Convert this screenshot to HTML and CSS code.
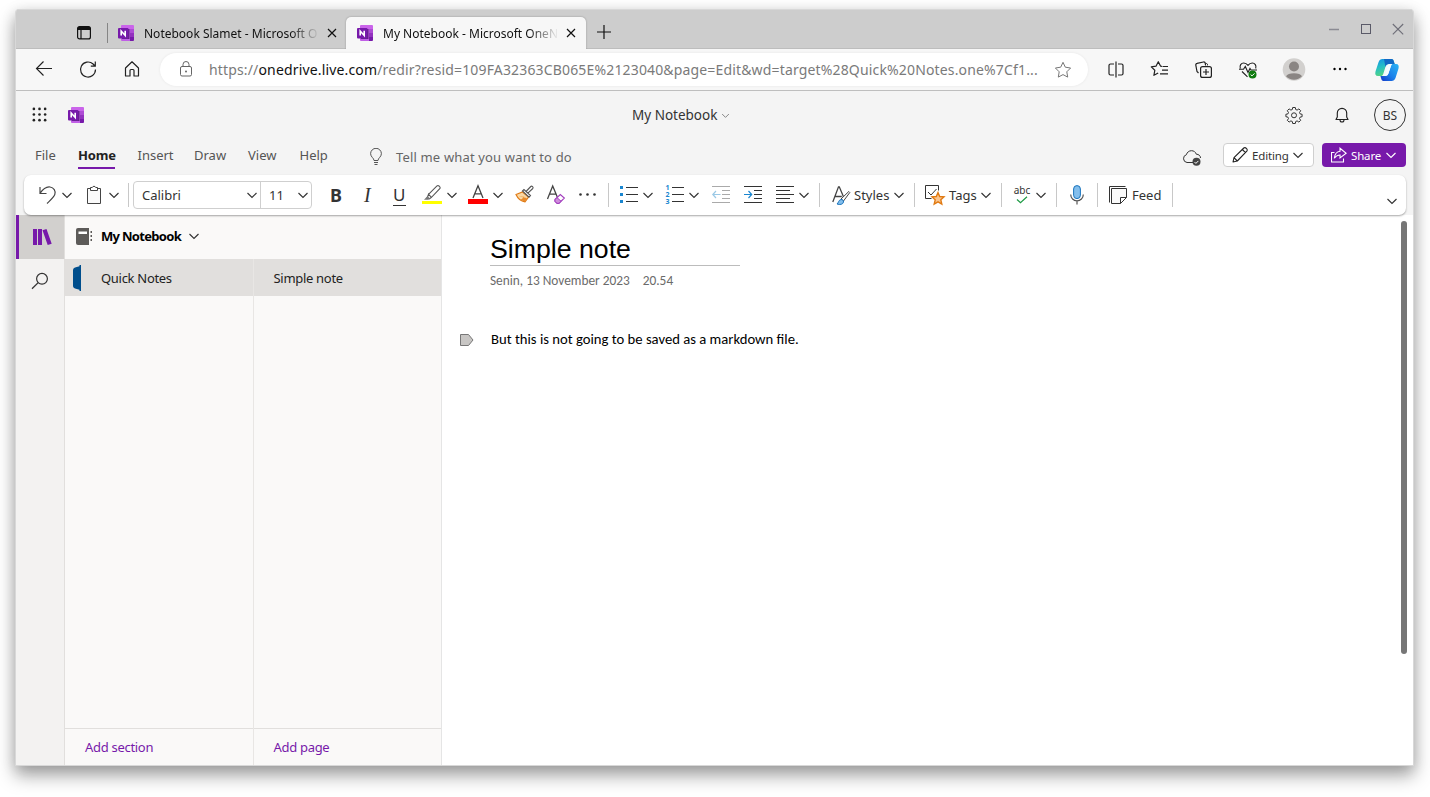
FILE: index.html
```
<!DOCTYPE html>
<html lang="id">
<head>
<meta charset="utf-8">
<title>My Notebook - Microsoft OneNote</title>
<link rel="stylesheet" href="styles.css">
</head>
<body>
<svg width="0" height="0" class="defs">
  <defs>
    <linearGradient id="cpA" x1="0" y1="0" x2="0.4" y2="1"><stop offset="0" stop-color="#1290e8"/><stop offset=".5" stop-color="#26bfc4"/><stop offset="1" stop-color="#59d67c"/></linearGradient>
    <linearGradient id="cpB" x1="1" y1="0" x2="0" y2="1"><stop offset="0" stop-color="#2ab4f4"/><stop offset=".55" stop-color="#1b80ea"/><stop offset="1" stop-color="#1538c8"/></linearGradient>
    <symbol id="onenote" viewBox="0 0 16 16">
      <path d="M4 0h11a1 1 0 0 1 1 1v4H3V1a1 1 0 0 1 1-1z" fill="#ca64ea"/>
      <path d="M3 4h9v12H4a1 1 0 0 1-1-1z" fill="#c05fe6"/>
      <path d="M12 4h4v4h-4z" fill="#ae4bd5"/><path d="M12 8h4v4h-4z" fill="#9332bf"/><path d="M12 12h4v3a1 1 0 0 1-1 1h-3z" fill="#7719aa"/>
      <path d="M4 4h7.500v10H4z" fill="#3f1060" opacity=".75"/>
      <rect y="3" width="10.500" height="10.500" rx="1" fill="#7719aa"/>
      <path d="M3.200 10.600V6l4 4.500V5.800" fill="none" stroke="#fff" stroke-width="1.600"/>
    </symbol>
    <symbol id="chev" viewBox="0 0 12 12"><path d="M1.500 4l4.500 4.500L10.500 4" fill="none" stroke="currentColor" stroke-width="1.150"/></symbol>
    <symbol id="x" viewBox="0 0 10 10"><path d="M1 1l8 8M9 1l-8 8" fill="none" stroke="currentColor" stroke-width="1.200"/></symbol>
  </defs>
</svg>
<div class="window">
  <div class="titlebar">
    <svg class="workspaces" viewBox="0 0 16 16"><rect x="1.600" y="1.600" width="12.800" height="12.300" rx="2" fill="none" stroke="#111" stroke-width="1.200"/><path d="M1.600 5V3.500a2 2 0 0 1 2-2h8.800a2 2 0 0 1 2 2V5z" fill="#111"/><path d="M5 5v9" stroke="#111" stroke-width="1.200"/></svg>
    <div class="tab idle"><svg class="logo"><use href="#onenote"/></svg><span class="tabname">Notebook Slamet - Microsoft O</span><svg class="close"><use href="#x"/></svg></div>
    <div class="tab active"><svg class="logo"><use href="#onenote"/></svg><span class="tabname">My Notebook - Microsoft OneN</span><svg class="close"><use href="#x"/></svg></div>
    <svg class="plus" viewBox="0 0 14 14"><path d="M7 0v14M0 7h14" stroke="#111" stroke-width="1.200"/></svg>
    <div class="controls">
      <svg viewBox="0 0 12 12"><path d="M1 6.500h10" stroke="#8b8b93" stroke-width="1.600"/></svg>
      <svg viewBox="0 0 12 12"><rect x="1.500" y="1.500" width="9" height="9" fill="none" stroke="#5a5a68"/></svg>
      <svg viewBox="0 0 12 12"><path d="M.8 1l10.400 10.400M11.200 1L.8 11.400" stroke="#6e6e78" stroke-width="1.100"/></svg>
    </div>
  </div>
  <div class="navbar">
    <svg class="nv" viewBox="0 0 20 20"><path d="M18 8.500H2.500M9.500 1.500l-7 7 7 7" fill="none" stroke="#222" stroke-width="1.150"/></svg>
    <svg class="nv" viewBox="0 0 20 20"><path d="M17.500 9.500a7.500 7.500 0 1 1-2.400-5.500L17 6M17.300 1.500v4.600h-4.500" fill="none" stroke="#222" stroke-width="1.200"/></svg>
    <svg class="nv" viewBox="0 0 20 20"><path d="M3.500 8L10 1.800 16.500 8v8H12v-5.500a1 1 0 0 0-1-1H9a1 1 0 0 0-1 1V16H3.500z" fill="none" stroke="#222" stroke-width="1.200" stroke-linejoin="round"/></svg>
    <div class="address">
      <svg class="lock" viewBox="0 0 16 18"><rect x="2.500" y="5.500" width="11" height="9.500" rx="1.500" fill="none" stroke="#666"/><path d="M5 5.500V3.500a3 3 0 0 1 6 0v2" fill="none" stroke="#666"/><circle cx="8" cy="10.500" r="1" fill="#666"/></svg>
      <span class="url">https://<b>onedrive.live.com</b>/redir?resid=109FA32363CB065E%2123040&amp;page=Edit&amp;wd=target%28Quick%20Notes.one%7Cf1...</span>
      <svg class="star" viewBox="0 0 18 18"><path d="M9 1.300l2.300 4.900 5.300.8-3.800 3.800.9 5.300L9 13.600l-4.700 2.500.9-5.300L1.400 7l5.300-.8z" fill="none" stroke="#777" stroke-linejoin="round"/></svg>
    </div>
    <svg class="nv split" viewBox="0 0 20 20"><path d="M8 4H4.500A1.500 1.500 0 0 0 3 5.500v8A1.500 1.500 0 0 0 4.500 15H8M12 4h3.500A1.500 1.500 0 0 1 17 5.500v8a1.500 1.500 0 0 1-1.500 1.500H12M10 1.500v16" fill="none" stroke="#222" stroke-width="1.200"/></svg>
    <svg class="nv fav" viewBox="0 0 20 20"><path d="M12 6.300l-1.500-.2L8.300 1.700 6 6.200l-4.700.7 3.500 3.400-.9 5 4.300-2.300M12.500 6.500H18M12 10.200h6M10 13.800h8" fill="none" stroke="#222" stroke-width="1.200" stroke-linejoin="round"/></svg>
    <svg class="nv col" viewBox="0 0 20 20"><path d="M4.500 13L3 11.500 1.800 5.200a1.500 1.500 0 0 1 1.200-1.800L9.500 2a1.500 1.500 0 0 1 1.700 1.200l.4 2.300" fill="none" stroke="#222" stroke-width="1.200"/><path d="M11.500 3.200l1 .3a1.500 1.500 0 0 1 1 1.900" fill="none" stroke="#222"/><rect x="6.600" y="6.600" width="10.800" height="10.800" rx="2" fill="#f7f7f7" stroke="#222" stroke-width="1.200"/><path d="M12 9v6M9 12h6" stroke="#222" stroke-width="1.200"/></svg>
    <svg class="nv heart" viewBox="0 0 20 20"><path d="M2.300 8.500C1.300 5.500 3.200 3 5.700 3 7.500 3 9 4 10 5.300 11 4 12.500 3 14.300 3c2.500 0 4.400 2.500 3.400 5.500M4 11.500l5.500 5.300M1 9.200h4.500L7.300 6.500l2.700 6 2-4 1 1.500h6" fill="none" stroke="#222" stroke-width="1.150"/><circle cx="14.500" cy="14.500" r="4" fill="#107c10"/><path d="M12.600 14.500l1.400 1.400 2.500-2.500" fill="none" stroke="#fff"/></svg>
    <svg class="avatar" viewBox="0 0 24 24"><circle cx="12" cy="11.500" r="11.300" fill="#d2d0ce"/><circle cx="12" cy="8.500" r="5" fill="#8a8583"/><path d="M4 18.300c1-2.100 4-3 8-3s7 .9 8 3a11 11 0 0 1-16 0z" fill="#8a8583"/></svg>
    <svg class="nv more" viewBox="0 0 20 20"><circle cx="4.500" cy="9" r="1.200"/><circle cx="10" cy="9" r="1.200"/><circle cx="15.500" cy="9" r="1.200"/></svg>
    <svg class="copilot" viewBox="0 0 26 26"><path d="M8.500 2h9c1.500 0 2 1 2.500 3l.7 2H15c-2 0-3 1.200-3.600 3l-2 6.500C8.800 18.500 8 19 6.500 19H4C1.500 19 .8 17 1.500 14.500L4.600 5C5.300 3 6.500 2 8.500 2z" fill="url(#cpA)"/><path d="M10 2h7.500c1.500 0 2 1 2.500 3l.7 2H15c-2 0-3 1.200-3.600 3z" fill="#1268c4"/><path d="M17.500 24h-8c-1.500 0-2-1-2.500-3l-.6-2H11c2 0 3-1.200 3.600-3l2-6.500C17.200 7.500 18 7 19.500 7H22c2.500 0 3.200 2 2.500 4.500l-3 9.500c-.8 2-2 3-4 3z" fill="url(#cpB)"/><path d="M13.300 9.500c.7-1.800 1.500-2.500 3-2.500h1.500l-3.200 9c-.5 2-1.500 3-3.500 3H9.700c1-.8 1.300-1.500 1.600-2.500z" fill="#f3fbff"/></svg>
  </div>
  <div class="apphead">
    <svg class="waffle" viewBox="0 0 16 16"><g fill="#222"><circle cx="2" cy="2" r="1.400"/><circle cx="8" cy="2" r="1.400"/><circle cx="14" cy="2" r="1.400"/><circle cx="2" cy="8" r="1.400"/><circle cx="8" cy="8" r="1.400"/><circle cx="14" cy="8" r="1.400"/><circle cx="2" cy="14" r="1.400"/><circle cx="8" cy="14" r="1.400"/><circle cx="14" cy="14" r="1.400"/></g></svg>
    <svg class="logo"><use href="#onenote"/></svg>
    <span class="doc">My Notebook</span><svg class="docchev"><use href="#chev"/></svg>
    <svg class="gear" viewBox="0 0 18 18"><path d="M7.700 1.500h2.600l.4 2 1.400.6 1.800-1.200 1.800 1.800-1.200 1.800.6 1.400 2 .4v2.400l-2 .4-.6 1.400 1.200 1.800-1.800 1.800-1.800-1.200-1.400.6-.4 2H7.700l-.4-2-1.400-.6-1.800 1.200-1.800-1.800 1.200-1.800-.6-1.400-2-.4V8.300l2-.4.6-1.400-1.200-1.800 1.800-1.800 1.800 1.200 1.400-.6z" fill="none" stroke="#333" stroke-linejoin="round"/><circle cx="9" cy="9.300" r="2.500" fill="none" stroke="#333"/></svg>
    <svg class="bell" viewBox="0 0 16 18"><path d="M2 13.500h12L12.700 11V7a4.700 4.700 0 0 0-9.400 0v4z" fill="none" stroke="#222" stroke-width="1.150" stroke-linejoin="round"/><path d="M6 14a2 2 0 0 0 4 0" fill="none" stroke="#222" stroke-width="1.100"/></svg>
    <span class="initials">BS</span>
  </div>
  <div class="menu">
    <span class="m1">File</span><span class="m2">Home</span><span class="m3">Insert</span><span class="m4">Draw</span><span class="m5">View</span><span class="m6">Help</span>
    <svg class="bulb" viewBox="0 0 14 18"><path d="M5 12.500c0-2.500-3.400-3.500-3.400-6.800a5.400 5.400 0 0 1 10.800 0c0 3.300-3.400 4.300-3.400 6.800zM5 14.500h4M5.500 16.500h3" fill="none" stroke="#555"/></svg>
    <span class="tell">Tell me what you want to do</span>
    <svg class="cloud" viewBox="0 0 20 18"><path d="M12 13.500H5a4 4 0 0 1-.6-7.800C5 3.300 7 1.700 9.500 1.700c2.300 0 4.100 1.300 4.800 3.500 2.500.1 4.200 1.500 4.200 3.800" fill="none" stroke="#333"/><circle cx="14.500" cy="12.800" r="4" fill="#444"/><path d="M12.500 13l1.400 1.400 2.500-2.500" fill="none" stroke="#fff"/></svg>
    <div class="btn edit"><svg class="pen" viewBox="0 0 16 16"><path d="M1 15l1-4.300L11.800 1c1.600-1.200 4.300 1.200 3 3.100L5.300 14zM10.300 2.500l3.200 3.200M2 10.700L5.300 14" fill="none" stroke="#222" stroke-width="1.100" stroke-linejoin="round"/></svg><span>Editing</span><svg class="chev"><use href="#chev"/></svg></div>
    <div class="btn share"><svg class="pen" viewBox="0 0 16 16"><path d="M3.500 5.500H.5v9.500h12V11.500M9 4.200V1.200L15.200 6.200 9 11V8C6.500 8 4.800 9 3.300 11.300c.5-4.300 2.400-6.800 5.700-7.100z" fill="none" stroke="#fff" stroke-width="1.100"/></svg><span>Share</span><svg class="chev"><use href="#chev"/></svg></div>
  </div>
  <div class="ribbon">
    <svg class="ic" viewBox="0 0 20 20"><path d="M2 2v6.500h6.500M2 8.300C5 4 8.500 1.500 12 2c3.800.6 6 4 4.800 7.500C16 12 12 15.500 9 18.500" fill="none" stroke="#444" stroke-width="1.150"/></svg>
    <svg class="chev"><use href="#chev"/></svg>
    <svg class="ic" viewBox="0 0 20 20"><path d="M4.500 3.500h-3v15h13v-15h-3" fill="#fafafa" stroke="#444"/><path d="M4.500 5.500v-3H6.300a1.800 1.800 0 0 1 3.400 0h1.800v3z" fill="#fff" stroke="#444"/></svg>
    <svg class="chev"><use href="#chev"/></svg>
    <i class="sep"></i>
    <div class="combo"><div class="fam"><span>Calibri</span><svg class="chev"><use href="#chev"/></svg></div><div class="size"><span>11</span><svg class="chev"><use href="#chev"/></svg></div></div>
    <span class="B">B</span><span class="I">I</span><span class="U">U</span>
    <svg class="ic" viewBox="0 0 20 20"><rect y="16" width="20" height="3" fill="#ff0"/><path d="M6.500 9.300L15 .9c1.300-1 3.800.8 3 2.500L9.500 12.300 6.500 9.300l-1.500 4L7.300 14l2.200-1.700" fill="#fff" stroke="#555" stroke-width="1.100"/><path d="M5.500 11L8 13.500 6 14.800H2z" fill="#777"/></svg>
    <svg class="chev"><use href="#chev"/></svg>
    <svg class="ic" viewBox="0 0 20 20"><rect y="14" width="20" height="5" fill="red"/><path d="M5 13L10 .8 15 13M6.700 8.800h6.600" fill="none" stroke="#444" stroke-width="1.300"/></svg>
    <svg class="chev"><use href="#chev"/></svg>
    <svg class="ic" viewBox="0 0 20 20"><path d="M7.500 7l6 5-3.500 4.800c-3.800-.5-7-2.800-9-7.300z" fill="#fbd9a5" stroke="#e07b17" stroke-width="1.200"/><path d="M3.500 11.500l6 .3-4 3.300L10 16.500l2-3.500z" fill="#e88b2c"/><path d="M7.500 6L9 4.500l6.500 6-1.500 1.700zM11 6.500l4.800-5c1-1 3 .8 2 2l-5.200 4.800" fill="#fff" stroke="#555" stroke-width="1.100"/></svg>
    <svg class="ic" viewBox="0 0 20 20"><path d="M1.500 14L6.700 1l5 12M3.300 9.200h7" fill="none" stroke="#444" stroke-width="1.300"/><path d="M9 14.500l5.300-5 4 3.600-5.300 5.200H11l-2-2z" fill="#fff" stroke="#a33fbe" stroke-width="1.200"/><path d="M9 14.500l2-1.900 4 3.600-2 2.100H11l-2-2z" fill="#cf8edc" stroke="#a33fbe"/></svg>
    <svg class="ic" viewBox="0 0 20 20"><g fill="#333"><circle cx="2.500" cy="9.500" r="1.300"/><circle cx="9.500" cy="9.500" r="1.300"/><circle cx="16.500" cy="9.500" r="1.300"/></g></svg>
    <i class="sep"></i>
    <svg class="ic" viewBox="0 0 20 20"><path d="M0 1h3v3H0zM0 8h3v3H0zM0 15h3v3H0z" fill="#1a86d0"/><path d="M6 2.500h12M6 9.500h12M6 16.500h12" stroke="#333"/></svg>
    <svg class="chev"><use href="#chev"/></svg>
    <svg class="ic" viewBox="0 0 20 20"><g class="digits"><text x="-.5" y="5">1</text><text x="-.5" y="12">2</text><text x="-.5" y="19">3</text></g><path d="M6 2.500h12M6 9.500h12M6 16.500h12" stroke="#333"/></svg>
    <svg class="chev"><use href="#chev"/></svg>
    <svg class="ic" viewBox="0 0 20 20"><path d="M0 1.500h18M10 5.500h8M10 9.500h8M10 13.500h8M0 17.500h18" stroke="#aaa"/><path d="M8.500 9.500H1M4 6L.8 9.500 4 13" fill="none" stroke="#9bc9e6" stroke-width="1.200"/></svg>
    <svg class="ic" viewBox="0 0 20 20"><path d="M0 1.500h18M10 5.500h8M10 9.500h8M10 13.500h8M0 17.500h18" stroke="#333"/><path d="M0 9.500h7.500M4.500 6l3.200 3.500L4.500 13" fill="none" stroke="#1a86d0" stroke-width="1.200"/></svg>
    <svg class="ic" viewBox="0 0 20 20"><path d="M0 1.500h18M0 5.500h14M0 9.500h18M0 13.500h14M0 17.500h18" stroke="#333"/></svg>
    <svg class="chev"><use href="#chev"/></svg>
    <i class="sep"></i>
    <svg class="ic" viewBox="0 0 20 20"><path d="M.8 17L6.500 1.800h.8L12 13M2.800 11.500h7" fill="none" stroke="#444" stroke-width="1.300"/><path d="M9 14l7.800-7.500 1 1L11.500 16z" fill="#fff" stroke="#444"/><path d="M5 19c1.500-1 1.500-4 4-4.500 1.500-.2 2.800 1 2.500 2.500C11 19.500 8 20 5 19z" fill="#83beec" stroke="#1a74bd"/></svg>
    <span class="t">Styles</span>
    <svg class="chev"><use href="#chev"/></svg>
    <i class="sep"></i>
    <svg class="ic" viewBox="0 0 20 20"><path d="M6.500 13.500h-6V.5h13v5" fill="none" stroke="#333"/><path d="M3 7l3 3 5.500-6" fill="none" stroke="#333"/><path d="M13 7.500l1.700 4 4.300.4-3.200 2.900 1 4.200-3.800-2.200L9.200 19l1-4.200L7 11.900l4.300-.4z" fill="#fbc48c" stroke="#e07a12" stroke-width="1.400"/></svg>
    <span class="t">Tags</span>
    <svg class="chev"><use href="#chev"/></svg>
    <i class="sep"></i>
    <div class="spell"><span>abc</span><svg viewBox="0 0 12 8"><path d="M1 3.500l3.500 3.300L11 .8" fill="none" stroke="#1e9b45" stroke-width="1.200"/></svg></div>
    <svg class="chev"><use href="#chev"/></svg>
    <i class="sep"></i>
    <svg class="ic" viewBox="0 0 20 20"><path d="M1.700 9.500a6.300 6.300 0 0 0 12.600 0M8 16v3.500" fill="none" stroke="#555" stroke-width="1.200"/><rect x="4.600" y=".6" width="6.800" height="13" rx="3.400" fill="#83beec" stroke="#1a74bd"/></svg>
    <i class="sep"></i>
    <svg class="ic" viewBox="0 0 20 20"><path d="M.5 17.500V1.500h16" fill="none" stroke="#333"/><path d="M2.500 3.500h15v9l-6 6h-9zM17.500 12.500h-6v6" fill="#fafafa" stroke="#333"/></svg>
    <span class="t">Feed</span>
    <i class="sep"></i>
    <svg class="chev expand"><use href="#chev"/></svg>
  </div>
  <div class="body">
    <div class="rail">
      <div class="books"><svg viewBox="0 0 20 18"><path d="M0 1h4v16H0zM5 1h4v16H5zM9.500 2.200l4-1.200 5.200 14.700-4 1.300z" fill="#7719aa"/></svg></div>
      <svg class="find" viewBox="0 0 18 18"><circle cx="11" cy="6.800" r="5.400" fill="none" stroke="#333" stroke-width="1.200"/><path d="M7.200 10.600L1 16.800" stroke="#333" stroke-width="1.300"/></svg>
    </div>
    <div class="side">
      <div class="nb"><svg class="nbic" viewBox="0 0 17 17"><path d="M2 0h11v17H2a2 2 0 0 1-2-2V2a2 2 0 0 1 2-2z" fill="#5d5b59"/><path d="M2.500 3.500H11V6H2.500z" fill="#fff"/><path d="M14.500 3h1.500v2h-1.500zM14.500 7h1.500v2h-1.500zM14.500 11h1.500v2h-1.500z" fill="#5d5b59"/></svg><span>My Notebook</span><svg class="chev"><use href="#chev"/></svg></div>
      <div class="lists">
        <div class="list sections"><div class="item"><svg viewBox="0 0 8 26"><path d="M8 0v26H6.500v-1.300L2 23.500C.8 23 0 22 0 20.700V5.300C0 4 .8 3 2 2.500l4.500-1.200V0z" fill="#004e8c"/></svg><span>Quick Notes</span></div><div class="add">Add section</div></div>
        <div class="list pages"><div class="item"><span>Simple note</span></div><div class="add">Add page</div></div>
      </div>
    </div>
    <div class="canvas">
      <div class="note">
        <h1>Simple note</h1>
        <div class="date"><span>Senin, 13 November 2023</span><span>20.54</span></div>
        <div class="para"><svg viewBox="0 0 14 12"><path d="M.5.5h8L13 6l-4.500 5.500h-8z" fill="#c8c6c4" stroke="#777"/></svg><p>But this is not going to be saved as a markdown file.</p></div>
      </div>
      <div class="thumb"></div>
    </div>
  </div>
</div>
</body>
</html>
```
FILE: styles.css
```
* { box-sizing: border-box; }
body { margin: 0; width: 1430px; height: 797px; overflow: hidden; background: #fff; font: 13px "Noto Sans", sans-serif; color: #333; padding: 9px 0 0 15px; }
.defs { position: absolute; }
svg { flex: none; display: block; }
span { white-space: nowrap; }
.window { width: 1399px; height: 757px; border: 1px solid #d8d8d8; border-top: 0; border-radius: 4px 4px 0 0; background: #f4f4f4; box-shadow: 0 10px 18px 0 rgba(0,0,0,.34), 0 2px 14px rgba(0,0,0,.13); display: flex; flex-direction: column; overflow: hidden; }
.logo { width: 16px; height: 16px; }
.chev { width: 12px; height: 12px; color: #333; }

.titlebar { height: 40px; background: #cdcdcd; border-bottom: 1px solid #bdbdbd; display: flex; padding: 7px 9px 0 60px; border-top: 1px solid #d8d8d8; }
.workspaces { width: 16px; height: 16px; margin: 8px 15px 0 0; }
.tab { display: flex; align-items: center; height: 32px; font-size: 12px; color: #111; }
.idle { width: 239px; padding-left: 10px; border-left: 1px solid #858585; height: 20px; margin-top: 6px; }
.active { width: 240px; padding-left: 11px; background: #f7f7f7; border-radius: 5px 5px 0 0; box-shadow: 0 0 2px rgba(0,0,0,.3); }
.tabname { width: 174px; margin: 0 8.5px 0 10px; overflow: hidden; mask-image: linear-gradient(90deg, #000 84%, transparent 101%); }
.close { width: 10px; height: 10px; }
.plus { width: 14px; height: 14px; margin: 8px 0 0 10.5px; }
.controls { display: flex; gap: 20px; margin: 6px 0 0 auto; }
.controls svg { width: 12px; height: 12px; }

.navbar { height: 42px; flex: none; background: #f7f7f7; border-bottom: 1px solid #bebebe; display: flex; align-items: center; padding-left: 18px; }
.nv { width: 20px; height: 20px; margin-right: 24px; }
.address { width: 928px; height: 33px; border-radius: 17px; background: #fff; box-shadow: 0 0 3px rgba(0,0,0,.07); display: flex; align-items: center; margin: 0 17.5px 0 -6px; padding-left: 18px; }
.lock { width: 16px; height: 18px; margin-right: 15px; }
.url { width: 829px; font-size: 14px; letter-spacing: .155px; color: #7a7a7a; }
.url b { font-weight: 400; color: #111; }
.star { width: 18px; height: 18px; margin-left: 16px; }
.avatar { width: 24px; height: 24px; margin: 0 24px 0 0; }
.copilot { width: 26px; height: 26px; }

.apphead { height: 48px; flex: none; display: flex; align-items: center; padding-left: 16px; }
.waffle { width: 15px; height: 15px; margin: 0 21px 2px 0; }
.doc { width: 87px; margin-left: 548px; font-size: 13.5px; }
.docchev { width: 9px; height: 9px; margin-left: 2px; color: #777; }
.gear { width: 18px; height: 18px; margin-left: 555px; }
.bell { width: 16px; height: 18px; margin-left: 31px; }
.initials { width: 32px; height: 32px; margin-left: 24px; border: 1px solid #333; border-radius: 50%; text-align: center; font-size: 12px; line-height: 32px; }

.menu { height: 36px; flex: none; display: grid; grid-template-columns: 43px 59.5px 56.5px 54px 51.5px 69px 27.5px 786px 41px 99px 84px; padding-left: 19px; align-items: start; color: #555; font-size: 13px; }
.menu > span { padding-top: 7px; }
.menu .m2 { width: 37px; height: 30px; font-weight: 700; letter-spacing: -.2px; color: #222; border-bottom: 2px solid #7719aa; }
.menu .tell { padding-top: 9px; color: #666; letter-spacing: .16px; }
.bulb { width: 14px; height: 18px; margin-top: 9px; }
.cloud { width: 20px; height: 18px; margin-top: 10px; }
.btn { height: 24px; margin-top: 4px; border-radius: 4px; display: flex; align-items: center; padding-left: 9px; font-size: 11.500px; letter-spacing: -.15px; color: #333; }
.edit { width: 91px; border: 1px solid #cfcfcf; background: #fff; padding-left: 8px; }
.share { background: #7719aa; color: #fff; }
.share .chev { color: #fff; }
.btn .pen { width: 16px; height: 16px; margin-right: 4px; }
.btn .chev { margin-left: auto; margin-right: 9px; }

.ribbon { width: 1382px; height: 40px; flex: none; margin-left: 8px; background: #fff; border-radius: 7px; box-shadow: 0 1px 2px rgba(0,0,0,.35); padding-left: 14px; position: relative; z-index: 1; display: grid; align-items: center;
  grid-template-columns: 23px 25px 21.5px 20.5px 5px 197px 34px 29px 29px 24px 22px 24px 23px 31px 32px 30px 12px 22px 24px 22px 24px 32px 32px 22px 21px 13px 22px 39px 21px 11px 24px 31px 21px 12px 22px 21px 13px 28px 12px 23px 40px 213.5px 20px; }
.ic { width: 20px; height: 20px; overflow: visible; }
.sep { width: 1px; height: 24px; background: #c8c8c8; }
.combo { width: 179px; height: 28px; border: 1px solid #cfcfcf; border-radius: 4px; display: flex; align-items: center; }
.fam { width: 127px; height: 100%; border-right: 1px solid #cfcfcf; display: flex; align-items: center; justify-content: space-between; padding: 0 2px 0 8px; }
.size { flex: 1; display: flex; align-items: center; justify-content: space-between; padding: 0 2px 0 8px; }
.B { font-size: 18px; font-weight: 700; line-height: 24px; }
.I { font: italic 20px/24px "Liberation Serif", serif; }
.U { font-size: 17px; line-height: 21px; width: 13px; height: 22px; border-bottom: 1px solid #333; }
.digits text { font: 700 7px "Noto Sans", sans-serif; fill: #1a86d0; }
.spell { width: 18px; height: 24px; display: flex; flex-direction: column; align-items: center; }
.spell span { font-size: 10px; line-height: 14px; }
.spell svg { width: 12px; height: 8px; margin-top: -1px; }
.expand { margin-top: 12px; }

.body { flex: 1; display: flex; min-height: 0; }
.rail { width: 49px; background: #f3f2f1; border-right: 1px solid #e1dfdd; }
.books { height: 44px; border-left: 3px solid #7719aa; background: #d2d0ce; padding: 13px 0 0 14px; }
.books svg { width: 20px; height: 18px; }
.find { width: 18px; height: 18px; margin: 13px 0 0 15px; }
.side { width: 377px; background: #faf9f8; border-right: 1px solid #e5e5e5; display: flex; flex-direction: column; color: #222; }
.nb { height: 44px; display: flex; align-items: center; padding: 0 0 2px 11px; font-weight: 700; letter-spacing: -.7px; color: #000; }
.nbic { width: 17px; height: 17px; margin-right: 8px; }
.nb .chev { margin-left: 7px; }
.lists { flex: 1; display: flex; letter-spacing: -.3px; }
.list { display: flex; flex-direction: column; width: 188px; }
.sections { width: 189px; border-right: 1px solid #e8e6e4; }
.item { height: 37px; background: #e1dfdd; display: flex; align-items: center; padding-left: 20px; }
.item svg { width: 8px; height: 26px; margin: 0 20px 0 -12px; }
.add { margin-top: auto; height: 37px; border-top: 1px solid #e1dfdd; padding: 9px 0 0 20px; line-height: 18px; color: #7719aa; }
.canvas { flex: 1; background: #fff; display: flex; justify-content: space-between; padding: 6px 6px 0 18px; }
.note { padding-top: 10px; }
h1 { width: 250px; height: 35px; margin: 0 0 0 30px; border-bottom: 1px solid #bcbcbc; font: 26.700px/36px "Liberation Sans", sans-serif; color: #000; }
.date { margin: 6px 0 0 30px; display: flex; gap: 13px; font: 13.333px/18px Carlito, Lato, sans-serif; color: #6b6b6b; }
.para { display: flex; align-items: center; margin-top: 39px; gap: 17px; }
.para svg { width: 14px; height: 12px; margin-top: 1px; }
.para p { margin: 0; font: 14.667px/20px Carlito, Lato, sans-serif; color: #000; }
.thumb { width: 6px; height: 433px; border-radius: 3px; background: #767676; }
```
